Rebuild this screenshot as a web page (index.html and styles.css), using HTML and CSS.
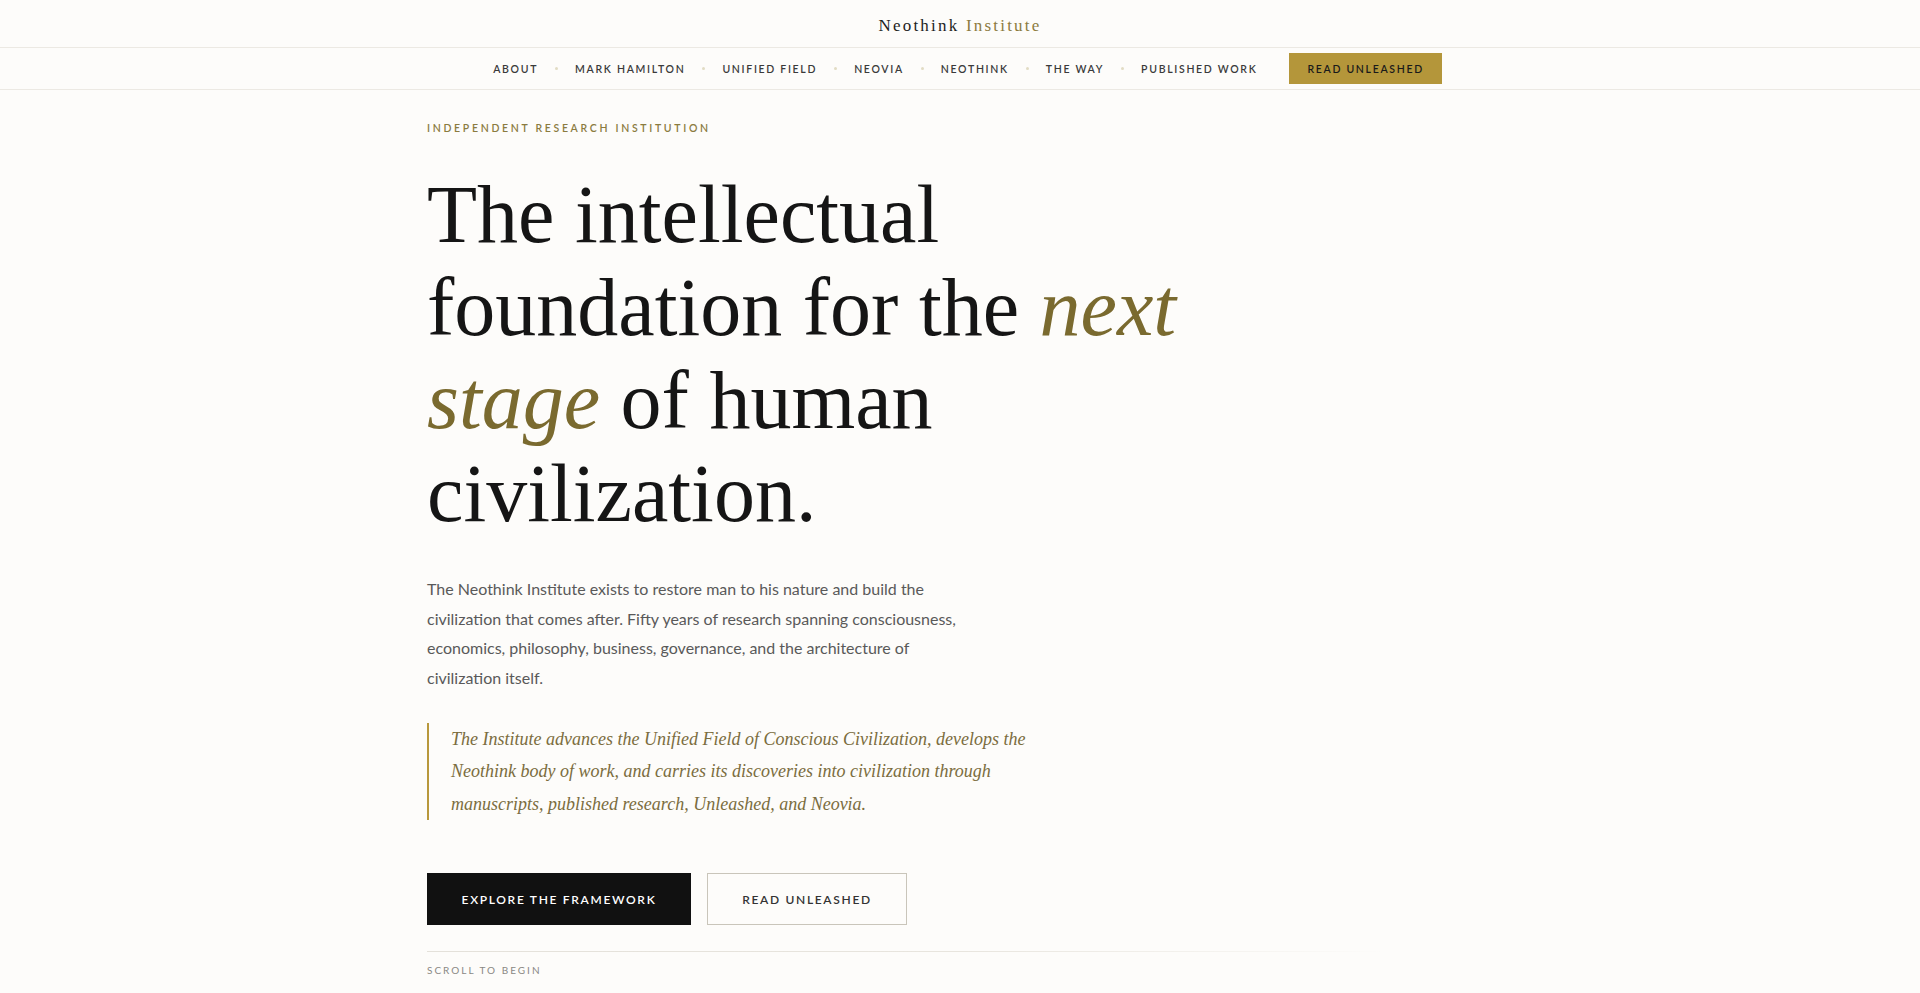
FILE: index.html
```html
<!DOCTYPE html>
<html lang="en">
<head>
<meta charset="utf-8">
<title>Neothink Institute</title>
<link rel="stylesheet" href="styles.css">
</head>
<body>
<header class="topbar">
  <a class="logo" href="#"><span class="logo-main">Neothink</span> <span class="logo-accent">Institute</span></a>
</header>
<nav class="mainnav">
  <ul class="navlist">
    <li><a href="#">About</a></li>
    <li class="sep"></li>
    <li><a href="#">Mark Hamilton</a></li>
    <li class="sep"></li>
    <li><a href="#">Unified Field</a></li>
    <li class="sep"></li>
    <li><a href="#">Neovia</a></li>
    <li class="sep"></li>
    <li><a href="#">Neothink</a></li>
    <li class="sep"></li>
    <li><a href="#">The Way</a></li>
    <li class="sep"></li>
    <li><a href="#">Published Work</a></li>
  </ul>
  <a class="nav-cta" href="#">Read Unleashed</a>
</nav>
<main class="hero">
  <p class="eyebrow">Independent Research Institution</p>
  <h1 class="headline"><span>The intellectual</span> <span>foundation for the</span> <em>next</em> <em>stage</em> <span>of human</span> <span>civilization.</span></h1>
  <p class="lead">The Neothink Institute exists to restore man to his nature and build the civilization that comes after. Fifty years of research spanning consciousness, economics, philosophy, business, governance, and the architecture of civilization itself.</p>
  <blockquote class="mission">The Institute advances the Unified Field of Conscious Civilization, develops the Neothink body of work, and carries its discoveries into civilization through manuscripts, published research, Unleashed, and Neovia.</blockquote>
  <div class="actions">
    <a class="btn btn-dark" href="#">Explore the Framework</a>
    <a class="btn btn-outline" href="#">Read Unleashed</a>
  </div>
  <div class="scroll">
    <div class="scroll-line"></div>
    <span class="scroll-label">Scroll to begin</span>
  </div>
</main>
</body>
</html>
```
FILE: styles.css
```css
* { box-sizing: border-box; }
html, body { margin: 0; padding: 0; }
body {
  background: #fdfcfa;
  color: #111;
  font-family: "Lato", "Liberation Sans", sans-serif;
}
a { text-decoration: none; color: inherit; }

.topbar {
  height: 48px;
  border-bottom: 1px solid #ece9e3;
  display: flex;
  align-items: center;
  justify-content: center;
}
.logo {
  font-family: "Liberation Serif", serif;
  font-size: 17px;
  letter-spacing: 0.13em;
  line-height: 1;
  padding-top: 4px;
}
.logo-main { color: #1e1e1e; }
.logo-accent { color: #8c7b3f; }

.mainnav {
  height: 42px;
  border-bottom: 1px solid #ece9e3;
  display: flex;
  align-items: center;
  justify-content: center;
  gap: 32px;
  padding-left: 15px;
}
.navlist {
  list-style: none;
  margin: 0;
  padding: 0;
  display: flex;
  align-items: center;
}
.navlist li { line-height: 1; }
.navlist a {
  display: block;
  font-size: 10.5px;
  line-height: 12px;
  font-weight: 600;
  letter-spacing: 0.16em;
  text-transform: uppercase;
  color: #3a3a3a;
}
.sep {
  width: 3px;
  height: 3px;
  border-radius: 50%;
  background: #e2dcc4;
  margin: 0 17px;
}
.nav-cta {
  background: #b4963a;
  color: #1a1a1a;
  font-size: 10.5px;
  font-weight: 600;
  letter-spacing: 0.16em;
  text-transform: uppercase;
  height: 31px;
  padding: 0 18px;
  display: flex;
  align-items: center;
}

.hero {
  width: 1066px;
  margin: 0 auto;
  padding-top: 31px;
}
.eyebrow {
  margin: 0;
  font-size: 10.5px;
  line-height: 14px;
  font-weight: 600;
  letter-spacing: 0.255em;
  text-transform: uppercase;
  color: #8b7b3f;
}
.headline {
  margin: 33px 0 0;
  max-width: 820px;
  font-family: "Liberation Serif", serif;
  font-weight: 400;
  font-size: 82px;
  line-height: 93px;
  color: #151515;
}
.headline em {
  color: #7a6a2f;
  font-style: italic;
}
.lead {
  margin: 34px 0 0;
  max-width: 555px;
  font-size: 16px;
  line-height: 29.7px;
  font-weight: 400;
  color: #595959;
}
.mission {
  margin: 30px 0 0;
  padding: 0 0 0 22px;
  border-left: 2px solid #b8983c;
  max-width: 620px;
  font-family: "Liberation Serif", serif;
  font-style: italic;
  font-size: 18px;
  line-height: 32.4px;
  color: #7b6d3e;
}
.actions {
  margin-top: 53px;
  display: flex;
  gap: 16px;
}
.btn {
  height: 52px;
  display: flex;
  align-items: center;
  justify-content: center;
  font-size: 12px;
  font-weight: 600;
  letter-spacing: 0.14em;
  text-transform: uppercase;
}
.btn-dark {
  width: 264px;
  background: #111;
  color: #fff;
}
.btn-outline {
  width: 200px;
  border: 1px solid #c9c5ba;
  color: #333;
}
.scroll { margin-top: 26px; }
.scroll-line {
  height: 1px;
  width: 100%;
  background: linear-gradient(to right, #e4e1da 0%, #e8e5de 50%, rgba(240,237,230,0) 90%);
}
.scroll-label {
  display: block;
  margin-top: 12px;
  font-size: 10px;
  line-height: 12px;
  letter-spacing: 0.2em;
  text-transform: uppercase;
  color: #8a8884;
}
```
